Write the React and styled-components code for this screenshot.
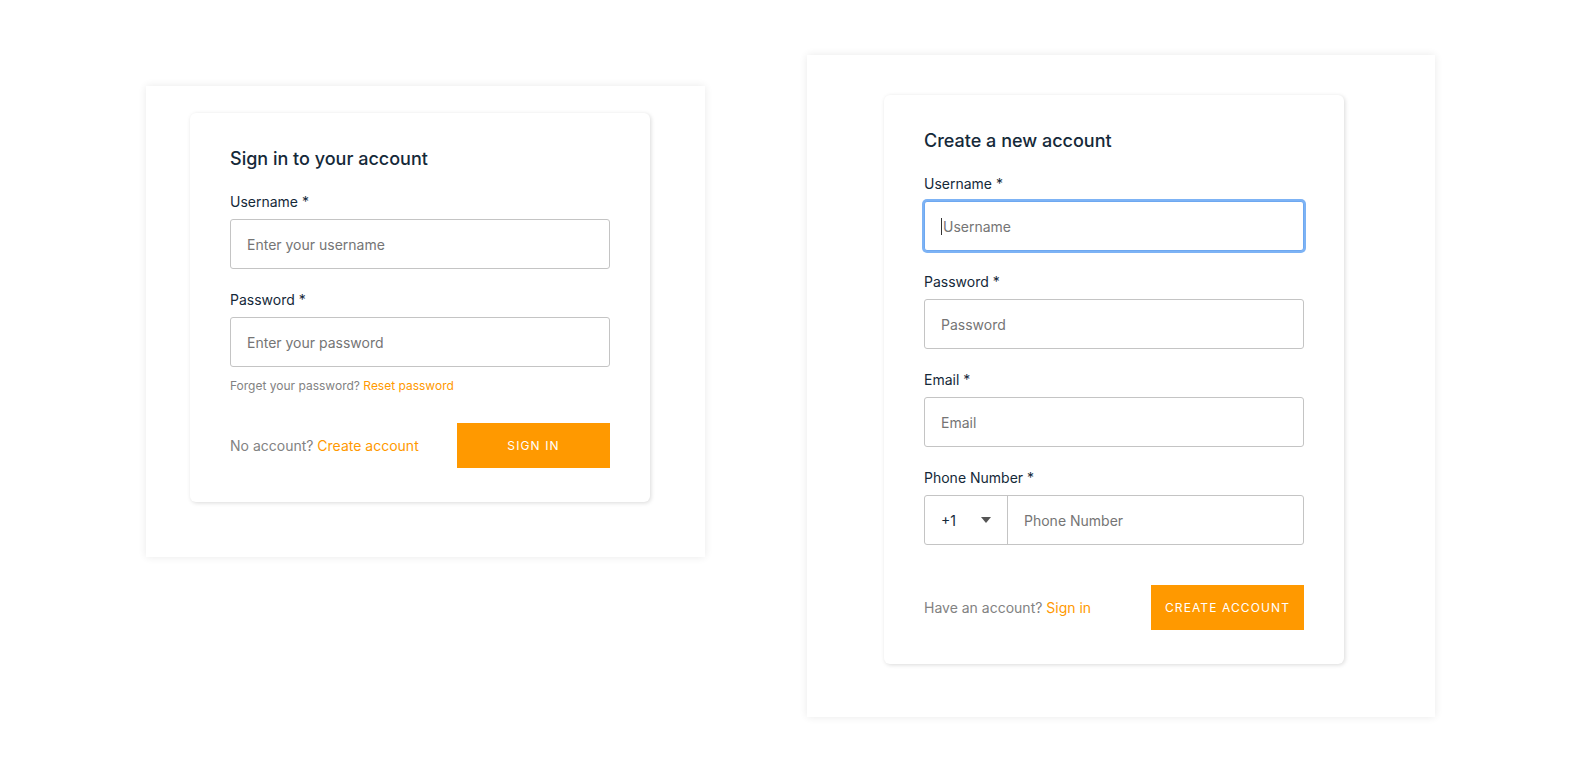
import React from "react";
import styled, { createGlobalStyle } from "styled-components";

const GlobalStyle = createGlobalStyle`
  html, body {
    margin: 0;
    padding: 0;
    background: #fff;
    font-family: Inter, "Noto Sans", "Liberation Sans", sans-serif;
  }
  * {
    box-sizing: border-box;
  }
`;

const Page = styled.div`
  width: 1587px;
  height: 779px;
  display: flex;
  align-items: flex-start;
  padding-left: 146px;
  gap: 102px;
`;

const Frame = styled.div`
  background: #fff;
  box-shadow: 0 0 8px rgba(0, 0, 0, 0.09);
  margin-top: ${p => p.top}px;
  padding: ${p => p.pad};
  width: ${p => p.w}px;
`;

const Card = styled.div`
  width: 460px;
  background: #fff;
  border-radius: 6px;
  box-shadow: 1px 1px 4px rgba(0, 0, 0, 0.15);
  padding: 34px 40px 34px 40px;
`;

const Header = styled.h2`
  margin: 0 0 21px;
  font-size: 18px;
  line-height: 24px;
  font-weight: 500;
  color: #152939;
`;

const Field = styled.div`
  margin-bottom: ${p => p.gap ?? 21}px;
`;

const Label = styled.label`
  display: block;
  font-size: 14px;
  line-height: 20px;
  color: #152939;
  margin-bottom: 7px;
`;

const Input = styled.div`
  height: 50px;
  border: 1px solid #c4c4c4;
  border-radius: 3px;
  padding: 0 16px;
  display: flex;
  align-items: center;
  font-size: 14px;
  color: #757575;
  background: #fff;
  ${p =>
    p.focused &&
    `
    border-color: #6ea8f0;
    box-shadow: 0 0 0 2px #7db3f5;
  `}
`;

const Caret = styled.span`
  display: inline-block;
  width: 1px;
  height: 17px;
  background: #333;
  margin-right: 1px;
`;

const PhoneGroup = styled.div`
  height: 50px;
  border: 1px solid #c4c4c4;
  border-radius: 3px;
  display: flex;
  font-size: 14px;
`;

const DialCode = styled.div`
  width: 83px;
  border-right: 1px solid #c4c4c4;
  display: flex;
  align-items: center;
  justify-content: space-between;
  padding: 0 16px 0 16px;
  color: #152939;
`;

const PhoneInput = styled.div`
  flex: 1;
  display: flex;
  align-items: center;
  padding: 0 16px;
  color: #757575;
`;

const Hint = styled.div`
  font-size: 12px;
  line-height: 16px;
  color: #828282;
  margin-top: -10px;
  margin-bottom: 29px;
`;

const Link = styled.a`
  color: #ff9900;
  text-decoration: none;
  cursor: pointer;
`;

const Footer = styled.div`
  display: flex;
  align-items: center;
  justify-content: space-between;
  margin-top: ${p => p.top ?? 0}px;
`;

const FooterText = styled.span`
  font-size: 14px;
  color: #828282;
`;

const Button = styled.button`
  min-width: 153px;
  height: 45px;
  padding: 0 12px;
  border: none;
  background: #ff9900;
  color: #fff;
  font-family: inherit;
  font-size: 12px;
  font-weight: 400;
  letter-spacing: 1.1px;
  text-transform: uppercase;
  cursor: pointer;
`;

const SignIn = () => (
  <Card>
    <Header>Sign in to your account</Header>
    <Field>
      <Label>Username *</Label>
      <Input>Enter your username</Input>
    </Field>
    <Field>
      <Label>Password *</Label>
      <Input>Enter your password</Input>
    </Field>
    <Hint>
      Forget your password? <Link>Reset password</Link>
    </Hint>
    <Footer>
      <FooterText>
        No account? <Link>Create account</Link>
      </FooterText>
      <Button>Sign in</Button>
    </Footer>
  </Card>
);

const SignUp = () => (
  <Card>
    <Header>Create a new account</Header>
    <Field>
      <Label>Username *</Label>
      <Input focused>
        <Caret />
        Username
      </Input>
    </Field>
    <Field>
      <Label>Password *</Label>
      <Input>Password</Input>
    </Field>
    <Field>
      <Label>Email *</Label>
      <Input>Email</Input>
    </Field>
    <Field gap={0}>
      <Label>Phone Number *</Label>
      <PhoneGroup>
        <DialCode>
          +1
          <svg width="10" height="6" viewBox="0 0 10 6">
            <path d="M0 0 L10 0 L5 6 Z" fill="#555" />
          </svg>
        </DialCode>
        <PhoneInput>Phone Number</PhoneInput>
      </PhoneGroup>
    </Field>
    <Footer top={40}>
      <FooterText>
        Have an account? <Link>Sign in</Link>
      </FooterText>
      <Button>Create Account</Button>
    </Footer>
  </Card>
);

export default function App() {
  return (
    <>
      <GlobalStyle />
      <Page>
        <Frame top={86} w={559} pad="27px 55px 55px 44px">
          <SignIn />
        </Frame>
        <Frame top={55} w={628} pad="40px 92px 53px 77px">
          <SignUp />
        </Frame>
      </Page>
    </>
  );
}
